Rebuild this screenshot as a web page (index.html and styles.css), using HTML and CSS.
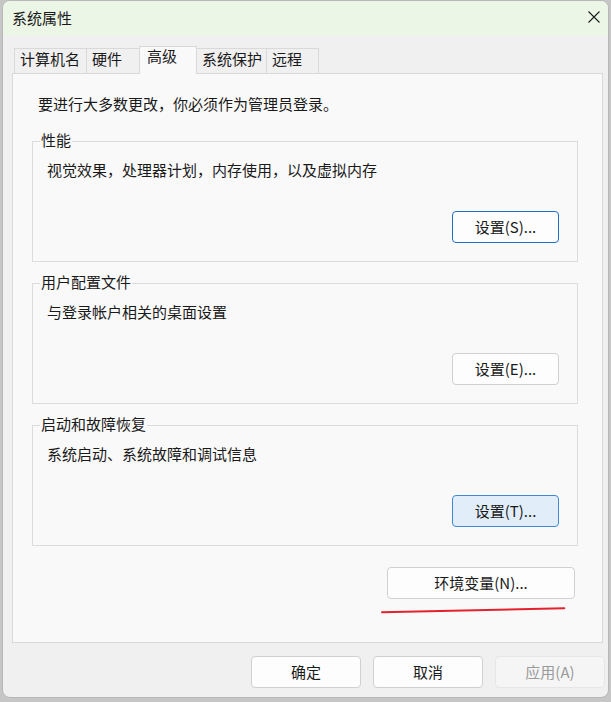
FILE: index.html
```html
<!DOCTYPE html>
<html lang="zh-CN">
<head>
<meta charset="utf-8">
<title>系统属性</title>
<link rel="stylesheet" href="styles.css">
</head>
<body>
<div class="window">
  <div class="titlebar">
    <span class="title">系统属性</span>
    <svg class="close" width="12" height="12" viewBox="0 0 12 12" aria-label="关闭">
      <path d="M0.5 0.5 L11.5 11.5 M11.5 0.5 L0.5 11.5" stroke="#1c1c1c" stroke-width="1.1" fill="none"/>
    </svg>
  </div>
  <div class="content">
    <div class="tabs">
      <div class="tab">计算机名</div>
      <div class="tab">硬件</div>
      <div class="tab active">高级</div>
      <div class="tab">系统保护</div>
      <div class="tab">远程</div>
    </div>
    <div class="panel">
      <p class="notice">要进行大多数更改，你必须作为管理员登录。</p>
      <section class="group">
        <div class="group-title">性能</div>
        <p class="group-desc">视觉效果，处理器计划，内存使用，以及虚拟内存</p>
        <div class="group-actions"><button class="btn btn-focus">设置(S)...</button></div>
      </section>
      <section class="group">
        <div class="group-title">用户配置文件</div>
        <p class="group-desc">与登录帐户相关的桌面设置</p>
        <div class="group-actions"><button class="btn">设置(E)...</button></div>
      </section>
      <section class="group">
        <div class="group-title">启动和故障恢复</div>
        <p class="group-desc">系统启动、系统故障和调试信息</p>
        <div class="group-actions"><button class="btn btn-hover">设置(T)...</button></div>
      </section>
      <div class="env-row"><button class="btn btn-env">环境变量(N)...</button></div>
    </div>
    <div class="dialog-buttons">
      <button class="btn btn-dialog">确定</button>
      <button class="btn btn-dialog">取消</button>
      <button class="btn btn-dialog btn-disabled">应用(A)</button>
    </div>
  </div>
  <svg class="annotation" width="192" height="14" viewBox="0 0 192 14">
    <path d="M4 10.3 L186.3 6.3" stroke="#e4222e" stroke-width="2" stroke-linecap="round" fill="none"/>
  </svg>
</div>
</body>
</html>
```

FILE: styles.css
```css
* { box-sizing: border-box; }
html, body { margin: 0; padding: 0; }
body {
  width: 611px;
  height: 702px;
  overflow: hidden;
  background: #c6c6c6;
  font-family: "Noto Sans CJK SC", sans-serif;
  font-size: 15px;
  line-height: 15px;
  color: #1a1a1a;
}
.window {
  position: relative;
  margin-left: 2px;
  width: 607px;
  height: 698px;
  background: #f0f0f0;
  border: 1px solid #b7b7b7;
  border-radius: 8px;
  overflow: hidden;
  display: flex;
  flex-direction: column;
}
.titlebar {
  flex: none;
  height: 35px;
  background: #ebf6e6;
  display: flex;
  justify-content: space-between;
  align-items: flex-start;
  padding: 9px 8px 0 9px;
}
.close { margin-top: 1px; display: block; }
.content {
  flex: 1;
  display: flex;
  flex-direction: column;
  padding: 10px 5px 0 9px;
}
.tabs {
  display: flex;
  align-items: flex-end;
  height: 27px;
  padding-left: 2px;
}
.tab {
  height: 25px;
  min-width: 53px;
  border: 1px solid #d9d9d9;
  border-bottom: none;
  background: #f0f0f0;
  padding: 2px 4px 0 5px;
  margin-left: -1px;
  white-space: nowrap;
}
.tab:first-child { margin-left: 0; padding-right: 6px; }
.tab:nth-child(2) { min-width: 54px; }
.tab.active {
  position: relative;
  z-index: 1;
  height: 28px;
  min-width: 58px;
  margin-bottom: -1px;
  background: #f9f9f9;
  padding: 1px 6px 0 7px;
}
.panel {
  border: 1px solid #d9d9d9;
  background: #f9f9f9;
  padding: 22px 24px 43px 19px;
}
.notice { margin: 0 0 30px 6px; }
.group {
  border: 1px solid #dcdcdc;
  padding: 0 18px 18px 0;
  margin-bottom: 21px;
}
.group-title {
  width: fit-content;
  margin: -10px 0 0 7px;
  padding: 0 1px;
  background: #f9f9f9;
}
.group-desc { margin: 15px 0 0 14px; }
.group-actions {
  display: flex;
  justify-content: flex-end;
  margin-top: 34px;
}
.btn {
  width: 107px;
  height: 32px;
  padding: 0 0 2px;
  border: 1px solid #d0d0d0;
  border-radius: 4px;
  background: #fdfdfd;
  font: inherit;
  line-height: 15px;
  color: #1a1a1a;
}
.btn-focus { border-color: #1f6fc4; }
.btn-hover { background: #e1eefa; border-color: #3f89d4; }
.env-row {
  display: flex;
  justify-content: flex-end;
  padding-right: 3px;
}
.btn-env { width: 188px; }
.dialog-buttons {
  display: flex;
  justify-content: flex-end;
  gap: 12px;
  margin-top: 13px;
  margin-right: -2px;
}
.btn-dialog { width: 110px; }
.btn-disabled {
  background: #f5f5f5;
  border-color: #e6e6e6;
  color: #9a9a9a;
}
.annotation {
  position: absolute;
  left: 375px;
  top: 601px;
}
```
